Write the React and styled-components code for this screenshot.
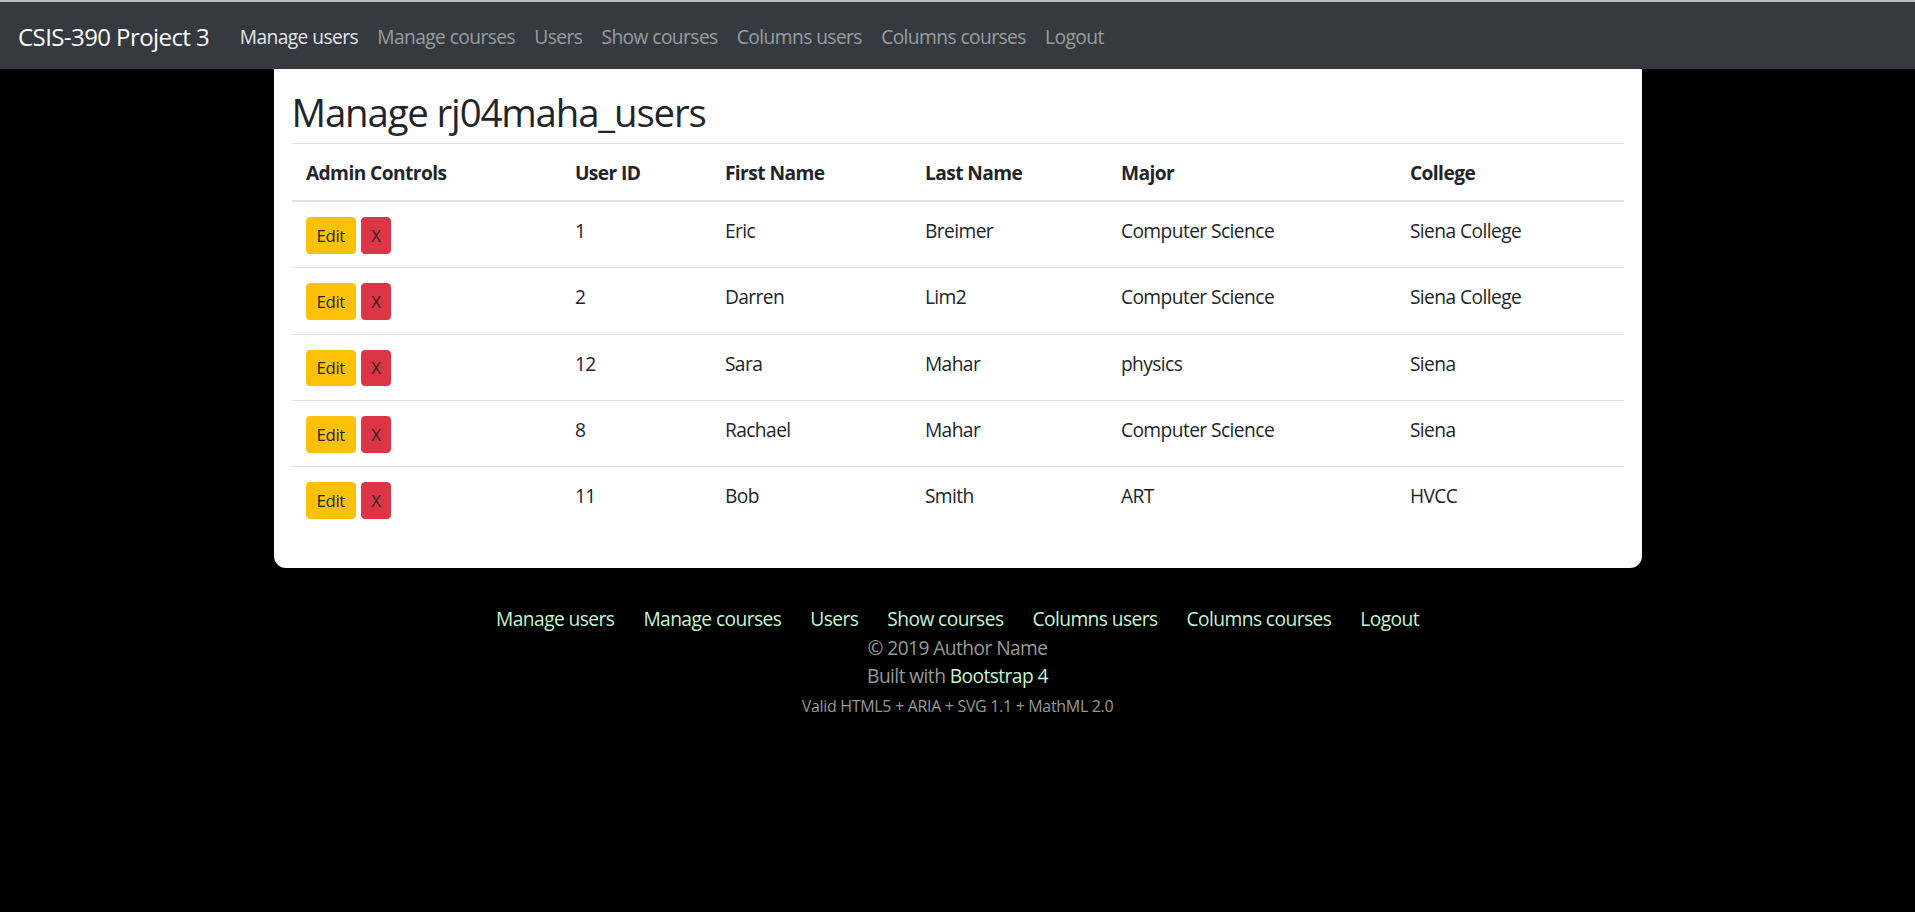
import React from "react";
import styled, { createGlobalStyle } from "styled-components";

const GlobalStyle = createGlobalStyle`
  html, body {
    margin: 0;
    padding: 0;
    background: #000;
  }
  body {
    font-family: "Open Sans", "Noto Sans", sans-serif;
    font-size: 19.2px;
    line-height: 1.5;
    letter-spacing: -0.03em;
    color: #212529;
  }
  * { box-sizing: border-box; }
`;

const Navbar = styled.nav`
  display: flex;
  align-items: center;
  height: 69px;
  padding: 3px 19px 0 18px;
  background: #343a40;
  border-top: 2px solid #b9bcc0;
`;

const Brand = styled.a`
  font-size: 24px;
  color: #fff;
  text-decoration: none;
  margin-right: 21px;
  line-height: 1.5;
`;

const NavLink = styled.a`
  padding: 0 9.6px;
  color: ${(p) => (p.$active ? "rgba(255,255,255,0.9)" : "rgba(255,255,255,0.5)")};
  text-decoration: none;
`;

const Container = styled.main`
  width: 1368px;
  margin: 0 auto;
`;

const Card = styled.section`
  background: #fff;
  padding: 20px 18px 35.5px;
  border-radius: 0 0 12px 12px;
`;

const Title = styled.h2`
  margin: 0 0 8px;
  font-size: 38.4px;
  font-weight: 500;
  line-height: 1.2;
  letter-spacing: -0.03em;
`;

const Table = styled.table`
  width: 100%;
  border-collapse: collapse;
  table-layout: fixed;
`;

const Th = styled.th`
  text-align: left;
  font-weight: 700;
  padding: 15px 14.4px 12px;
  border-top: 1px solid #dee2e6;
  border-bottom: 2px solid #dee2e6;
  vertical-align: bottom;
`;

const Td = styled.td`
  padding: 15px 14.4px 13.6px;
  vertical-align: top;
  border-top: ${(p) => (p.$first ? "none" : "1px solid #dee2e6")};
`;

const Controls = styled.div`
  display: flex;
  gap: 5px;
`;

const Button = styled.button`
  font-family: inherit;
  font-size: 16.8px;
  letter-spacing: -0.02em;
  line-height: 1.5;
  padding: 4.8px 9.6px;
  border: 1.2px solid ${(p) => p.$bg};
  border-radius: 3.84px;
  background: ${(p) => p.$bg};
  color: #212529;
  cursor: pointer;
`;

const Footer = styled.footer`
  margin-top: 37px;
  text-align: center;
  color: #999;
`;

const FooterNav = styled.div`
  display: flex;
  justify-content: center;
  gap: 29px;
`;

const FooterLink = styled.a`
  color: #c6f5cf;
  text-decoration: none;
`;

const FooterLine = styled.div`
  line-height: 1.45;
`;

const SmallLine = styled.div`
  font-size: 16px;
  letter-spacing: -0.02em;
  margin-top: 4px;
`;

const columns = [
  { label: "Admin Controls", width: 269 },
  { label: "User ID", width: 150 },
  { label: "First Name", width: 200 },
  { label: "Last Name", width: 196 },
  { label: "Major", width: 289 },
  { label: "College", width: 228 },
];

const rows = [
  ["1", "Eric", "Breimer", "Computer Science", "Siena College"],
  ["2", "Darren", "Lim2", "Computer Science", "Siena College"],
  ["12", "Sara", "Mahar", "physics", "Siena"],
  ["8", "Rachael", "Mahar", "Computer Science", "Siena"],
  ["11", "Bob", "Smith", "ART", "HVCC"],
];

const links = [
  "Manage users",
  "Manage courses",
  "Users",
  "Show courses",
  "Columns users",
  "Columns courses",
  "Logout",
];

export default function App() {
  return (
    <>
      <GlobalStyle />
      <Navbar>
        <Brand href="#">CSIS-390 Project 3</Brand>
        {links.map((l, i) => (
          <NavLink key={l} href="#" $active={i === 0}>
            {l}
          </NavLink>
        ))}
      </Navbar>
      <Container>
        <Card>
          <Title>Manage rj04maha_users</Title>
          <Table>
            <colgroup>
              {columns.map((c) => (
                <col key={c.label} style={{ width: c.width }} />
              ))}
            </colgroup>
            <thead>
              <tr>
                {columns.map((c) => (
                  <Th key={c.label}>{c.label}</Th>
                ))}
              </tr>
            </thead>
            <tbody>
              {rows.map((r, i) => (
                <tr key={r[0]}>
                  <Td $first={i === 0}>
                    <Controls>
                      <Button $bg="#ffc107">Edit</Button>
                      <Button $bg="#dc3545">X</Button>
                    </Controls>
                  </Td>
                  {r.map((cell, j) => (
                    <Td key={j} $first={i === 0}>
                      {cell}
                    </Td>
                  ))}
                </tr>
              ))}
            </tbody>
          </Table>
        </Card>
        <Footer>
          <FooterNav>
            {links.map((l) => (
              <FooterLink key={l} href="#">
                {l}
              </FooterLink>
            ))}
          </FooterNav>
          <FooterLine>© 2019 Author Name</FooterLine>
          <FooterLine>
            Built with <FooterLink href="#">Bootstrap 4</FooterLink>
          </FooterLine>
          <SmallLine>Valid HTML5 + ARIA + SVG 1.1 + MathML 2.0</SmallLine>
        </Footer>
      </Container>
    </>
  );
}
